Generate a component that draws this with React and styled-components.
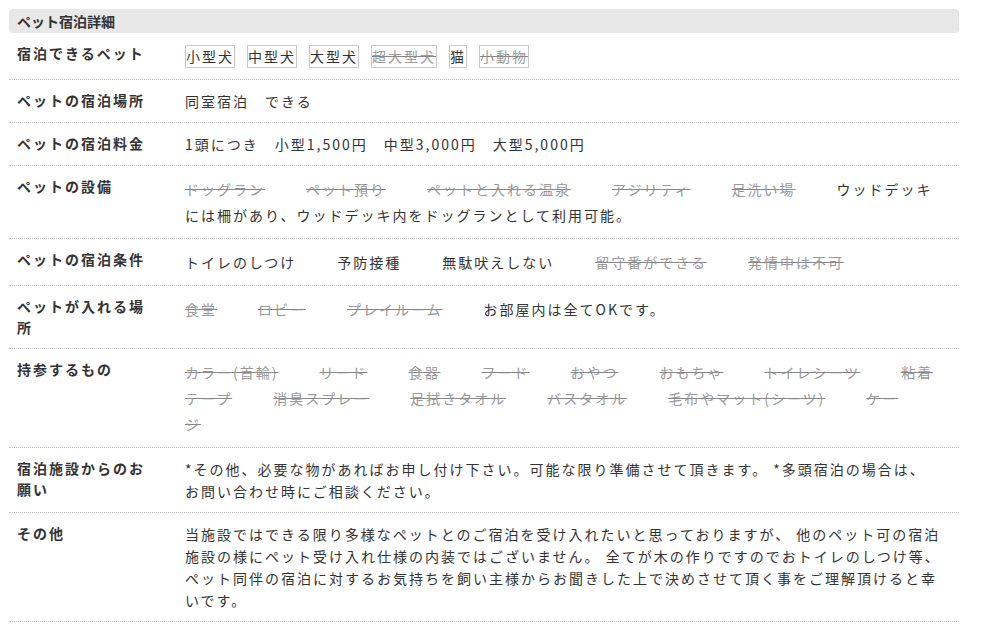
import React from "react";
import styled, { createGlobalStyle } from "styled-components";

const Global = createGlobalStyle`
  html, body { margin: 0; padding: 0; background: #fff; }
  body {
    font-family: "Noto Sans CJK JP", "Noto Sans", sans-serif;
    color: #333;
  }
`;

const Wrap = styled.div`
  padding: 9px;
  width: 950px;
`;

const Header = styled.div`
  height: 24px;
  background: #e8e8e8;
  border-radius: 4px;
  box-sizing: border-box;
  border-right: 1px solid #e0e0e0;
  padding-left: 8px;
  font-size: 14px;
  font-weight: 700;
  line-height: 24px;
  color: #333;
`;

const Row = styled.div`
  display: grid;
  grid-template-columns: 176px 1fr;
  border-bottom: 1px dotted #c4c4c4;
`;

const Label = styled.div`
  padding: 10px 32px 10px 8px;
  font-size: 14px;
  font-weight: 700;
  letter-spacing: 2px;
  line-height: 21px;
  color: #333;
`;

const Value = styled.div`
  padding: 10px 14px 10px 0;
  font-size: 14px;
  letter-spacing: 2px;
  line-height: ${(p) => (p.$list ? "26px" : "22px")};
  color: #333;
`;

const Tag = styled.span`
  display: inline-block;
  border: 1px solid #c8c8c8;
  line-height: 21px;
  margin-right: 12px;
  color: ${(p) => (p.$off ? "#999" : "#333")};
  text-decoration: ${(p) => (p.$off ? "line-through" : "none")};
  text-decoration-color: #888;
`;

const Item = styled.span`
  margin-right: 41px;
  color: ${(p) => (p.$off ? "#999" : "#333")};
  text-decoration: ${(p) => (p.$off ? "line-through" : "none")};
  text-decoration-color: #888;
`;

const petTypes = [
  ["小型犬", false],
  ["中型犬", false],
  ["大型犬", false],
  ["超大型犬", true],
  ["猫", false],
  ["小動物", true],
];

const facilities = ["ドッグラン", "ペット預り", "ペットと入れる温泉", "アジリティ", "足洗い場"];
const conditions = [
  ["トイレのしつけ", false],
  ["予防接種", false],
  ["無駄吠えしない", false],
  ["留守番ができる", true],
  ["発情中は不可", true],
];
const places = ["食堂", "ロビー", "プレイルーム"];
const bring = [
  ["カラー(首輪)", true],
  ["リード", true],
  ["食器", false],
  ["フード", true],
  ["おやつ", false],
  ["おもちゃ", true],
  ["トイレシーツ", true],
  ["粘着テープ", false],
  ["消臭スプレー", true],
  ["足拭きタオル", true],
  ["バスタオル", false],
  ["毛布やマット(シーツ)", true],
  ["ケージ", false],
];

export default function App() {
  return (
    <>
      <Global />
      <Wrap>
        <Header>ペット宿泊詳細</Header>
        <Row>
          <Label>宿泊できるペット</Label>
          <Value $list>
            {petTypes.map(([t, off]) => (
              <Tag key={t} $off={off}>{t}</Tag>
            ))}
          </Value>
        </Row>
        <Row>
          <Label>ペットの宿泊場所</Label>
          <Value>同室宿泊　できる</Value>
        </Row>
        <Row>
          <Label>ペットの宿泊料金</Label>
          <Value>1頭につき　小型1,500円　中型3,000円　大型5,000円</Value>
        </Row>
        <Row>
          <Label>ペットの設備</Label>
          <Value $list>
            {facilities.map((t) => (
              <Item key={t} $off>{t}</Item>
            ))}
            ウッドデッキには柵があり、ウッドデッキ内をドッグランとして利用可能。
          </Value>
        </Row>
        <Row>
          <Label>ペットの宿泊条件</Label>
          <Value $list>
            {conditions.map(([t, off]) => (
              <Item key={t} $off={off}>{t}</Item>
            ))}
          </Value>
        </Row>
        <Row>
          <Label>ペットが入れる場所</Label>
          <Value $list>
            {places.map((t) => (
              <Item key={t} $off>{t}</Item>
            ))}
            お部屋内は全てOKです。
          </Value>
        </Row>
        <Row>
          <Label>持参するもの</Label>
          <Value $list>
            {bring.map(([t]) => (
              <Item key={t} $off>{t}</Item>
            ))}
          </Value>
        </Row>
        <Row>
          <Label>宿泊施設からのお願い</Label>
          <Value>
            *その他、必要な物があればお申し付け下さい。可能な限り準備させて頂きます。 *多頭宿泊の場合は、
            <br />
            お問い合わせ時にご相談ください。
          </Value>
        </Row>
        <Row>
          <Label>その他</Label>
          <Value>
            当施設ではできる限り多様なペットとのご宿泊を受け入れたいと思っておりますが、 他のペット可の宿泊施設の様にペット受け入れ仕様の内装ではございません。 全てが木の作りですのでおトイレのしつけ等、ペット同伴の宿泊に対するお気持ちを飼い主様からお聞きした上で決めさせて頂く事をご理解頂けると幸いです。
          </Value>
        </Row>
      </Wrap>
    </>
  );
}
